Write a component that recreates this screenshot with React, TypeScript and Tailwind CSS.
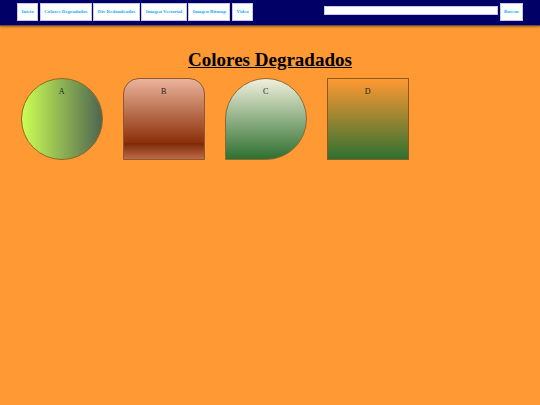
const links = ["Inicio", "Colores Degradados", "Div Redondeados", "Imagen Vectorial", "Imagen Bitmap", "Video"];

const btn = "flex h-[18px] items-center bg-white border border-[#c8c8e8] px-[3.5px] text-[5px] font-bold text-[#22aaff]";

export default function App() {
  return (
    <div className="min-h-[405px] w-[540px] bg-[#ff9933] font-['Liberation_Serif',serif] text-black">
      <header className="flex h-[26px] items-start justify-between border-b border-[#6b4a4a] bg-[#000066] pl-[17px] pr-[17px] pt-[3px] shadow-[0_1px_2px_rgba(0,0,0,0.35)]">
        <nav className="flex gap-[1.5px]">
          {links.map((l) => (
            <a key={l} className={btn}>{l}</a>
          ))}
        </nav>
        <div className="flex items-start gap-[2px]">
          <input className="mt-[3px] h-[9px] w-[174px] border border-[#c8c8e8] bg-white" />
          <button className={`${btn} w-[23px] justify-center px-0`}>Buscar</button>
        </div>
      </header>
      <h1 className="mt-[22px] text-center text-[19px] font-bold leading-[23px] underline">Colores Degradados</h1>
      <div className="mt-[7px] flex gap-[20.5px] pl-[21px] text-[8px]">
        <div className="h-[81.5px] w-[81.5px] rounded-full border border-[#8a6a20] bg-[linear-gradient(to_right,#ccff55,#4f6650)] pt-[7px] text-center text-[#222]">A</div>
        <div className="h-[81.5px] w-[81.5px] rounded-[16px_16px_0_0] border border-[#8a5a30] bg-[linear-gradient(to_bottom,#ecb49c_0%,#8a2f08_80%,#7a2806_80%,#c06a48_100%)] pt-[7px] text-center text-[#222]">B</div>
        <div className="h-[81.5px] w-[81.5px] rounded-[41px_41px_41px_0] border border-[#8a6a30] bg-[linear-gradient(to_bottom,#f0f0dc,#2f7030)] pt-[7px] text-center text-[#222]">C</div>
        <div className="h-[81.5px] w-[81.5px] border border-[#8a5a20] bg-[linear-gradient(to_bottom,#ff9933,#2f7030)] pt-[7px] text-center text-[#222]">D</div>
      </div>
    </div>
  );
}
